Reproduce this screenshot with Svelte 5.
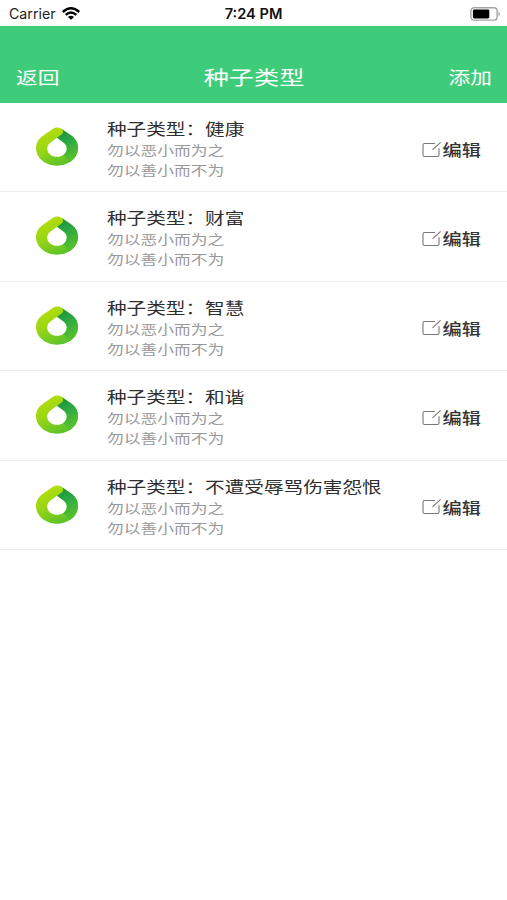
<script lang="ts">
	interface Seed {
		id: number;
		type: string;
		notes: string[];
	}

	const NOTES = ['勿以恶小而为之', '勿以善小而不为'];

	const seeds: Seed[] = ['健康', '财富', '智慧', '和谐', '不遭受辱骂伤害怨恨'].map((type, id) => ({
		id,
		type,
		notes: NOTES
	}));
</script>

{#snippet seedLogo()}
	<svg class="logo" viewBox="0 0 42 39" width="42" height="39">
		<defs>
			<linearGradient id="ring" x1="0.2" y1="0" x2="0.7" y2="1">
				<stop offset="0" stop-color="#b9e00a" />
				<stop offset="0.45" stop-color="#9ad614" />
				<stop offset="1" stop-color="#55c02c" />
			</linearGradient>
			<linearGradient id="leaf" x1="0" y1="0" x2="0.3" y2="1">
				<stop offset="0" stop-color="#128c3c" />
				<stop offset="0.45" stop-color="#2ca745" />
				<stop offset="1" stop-color="#55c02c" />
			</linearGradient>
		</defs>
		<!-- drop outline with a smaller drop cut out of it -->
		<path fill-rule="evenodd" d="M17 1.8 C19.5 0 23 0 25.5 1.8 L36 9 C40 12 42 16 42 21 C42 31 32.5 38.7 21 38.7 C9.5 38.7 0 31 0 21 C0 16 2.5 12 6.5 9 Z M21 10.8 L14.5 15.4 C12.4 17 11.2 19 11.2 21.4 C11.2 26.4 15.7 29.8 21 29.8 C26.3 29.8 30.8 26.4 30.8 21.4 C30.8 19 29.6 17 27.5 15.4 Z" fill="url(#ring)" />
		<path d="M26 2.2 L36 9 C40 12 42 16 42 21 C42 27 38.6 32 33.5 35.2 L27.4 28 C29.5 26.6 30.8 24 30.8 21.4 C30.8 19 29.6 17 27.5 15.4 L21 10.8 L25.6 7.6 C27.5 6 27.6 4 26 2.2 Z" fill="url(#leaf)" />
	</svg>
{/snippet}

{#snippet editIcon()}
	<svg class="edit-icon" viewBox="0 0 20 17" width="20" height="17">
		<path d="M13 2.5 H2.5 Q1 2.5 1 4 V14 Q1 15.5 2.5 15.5 H15.5 Q17 15.5 17 14 V7.2" />
		<path d="M10.5 8.8 L18.6 1.4" />
	</svg>
{/snippet}

<div class="screen">
	<div class="status-bar">
		<div class="carrier">
			<span>Carrier</span>
			<svg viewBox="0 0 18 14" width="18" height="14">
				<path d="M0.8 5 Q9 -2.4 17.2 5" />
				<path d="M3.7 7.8 Q9 3.2 14.3 7.8" />
				<path class="dot" d="M6 9.9 Q9 7.6 12 9.9 L9 12.8 Z" />
			</svg>
		</div>
		<span class="clock">7:24 PM</span>
		<svg class="battery" viewBox="0 0 31 14" width="31" height="14">
			<rect x="0.9" y="0.7" width="26.2" height="12.4" rx="3.2" fill="none" stroke="#a5a5a5" stroke-width="1.4" />
			<rect x="2.9" y="2.4" width="16.4" height="9" rx="1.4" fill="#000" />
			<path d="M28.4 4.6 Q31.4 7 28.4 9.2 Z" fill="#a5a5a5" />
		</svg>
	</div>

	<header class="nav">
		<span class="nav-btn back">返回</span>
		<span class="nav-title">种子类型</span>
		<span class="nav-btn add">添加</span>
	</header>

	<ul class="list">
		{#each seeds as seed (seed.id)}
			<li class="row">
				{@render seedLogo()}
				<div class="info">
					<div class="type">种子类型：{seed.type}</div>
					{#each seed.notes as note}
						<div class="note">{note}</div>
					{/each}
				</div>
				<div class="edit">
					{@render editIcon()}
					<span>编辑</span>
				</div>
			</li>
		{/each}
	</ul>
</div>

<style>
	:global(body) {
		margin: 0;
		background: #fff;
	}

	.screen {
		width: 507px;
		height: 900px;
		overflow: hidden;
		background: #fff;
		font-family: 'Noto Sans CJK SC', sans-serif;
	}

	.status-bar {
		display: grid;
		grid-template-columns: 1fr auto 1fr;
		align-items: center;
		height: 26px;
		box-sizing: border-box;
		padding: 1px 6px 0 9px;
		font-family: Inter, sans-serif;
		font-size: 14.2px;
		color: #222;
	}

	.carrier {
		display: flex;
		align-items: center;
		gap: 6px;
	}

	.carrier svg {
		fill: none;
		stroke: #000;
		stroke-width: 2.4;
	}

	.carrier .dot {
		fill: #000;
		stroke: none;
	}

	.clock {
		margin-right: 3px;
		font-size: 14.6px;
		font-weight: 600;
		color: #111;
	}

	.battery {
		justify-self: end;
	}

	.nav {
		display: grid;
		grid-template-columns: 1fr auto 1fr;
		align-items: center;
		height: 77px;
		box-sizing: border-box;
		padding: 23px 15px 0 16px;
		background: #3fcc7a;
		color: #fff;
	}

	/* glyphs are wider than tall throughout the screen */
	.nav-btn {
		font-size: 17.5px;
		transform: scaleX(1.24);
	}

	.back {
		justify-self: start;
		transform-origin: left;
	}

	.add {
		justify-self: end;
		transform-origin: right;
	}

	.nav-title {
		font-size: 19.5px;
		transform: scaleX(1.29);
	}

	.list {
		margin: 0;
		padding: 0;
		list-style: none;
	}

	.row {
		display: flex;
		align-items: flex-start;
		height: 89.4px;
		box-sizing: border-box;
		padding: 15px 26px 0 36px;
		border-bottom: 1px solid #ececec;
	}

	.logo {
		flex: none;
		margin: 9px 28.5px 0 0;
	}

	.info {
		flex: 1;
		white-space: nowrap;
	}

	.type,
	.note {
		line-height: 20px;
		transform-origin: left;
	}

	.type {
		margin-bottom: 2px;
		font-size: 15.5px;
		color: #2e2e2e;
		transform: scaleX(1.266);
	}

	.note {
		font-size: 13px;
		color: #999;
		transform: scaleX(1.29);
	}

	.edit {
		display: flex;
		align-items: center;
		gap: 4px;
		height: 20px;
		margin-top: 21px;
		font-size: 16px;
		font-weight: 500;
		color: #333;
	}

	.edit span {
		transform: scaleX(1.2);
		transform-origin: right;
	}

	.edit-icon {
		margin-right: 3px;
		fill: none;
		stroke: #777;
		stroke-width: 1.1;
	}
</style>
